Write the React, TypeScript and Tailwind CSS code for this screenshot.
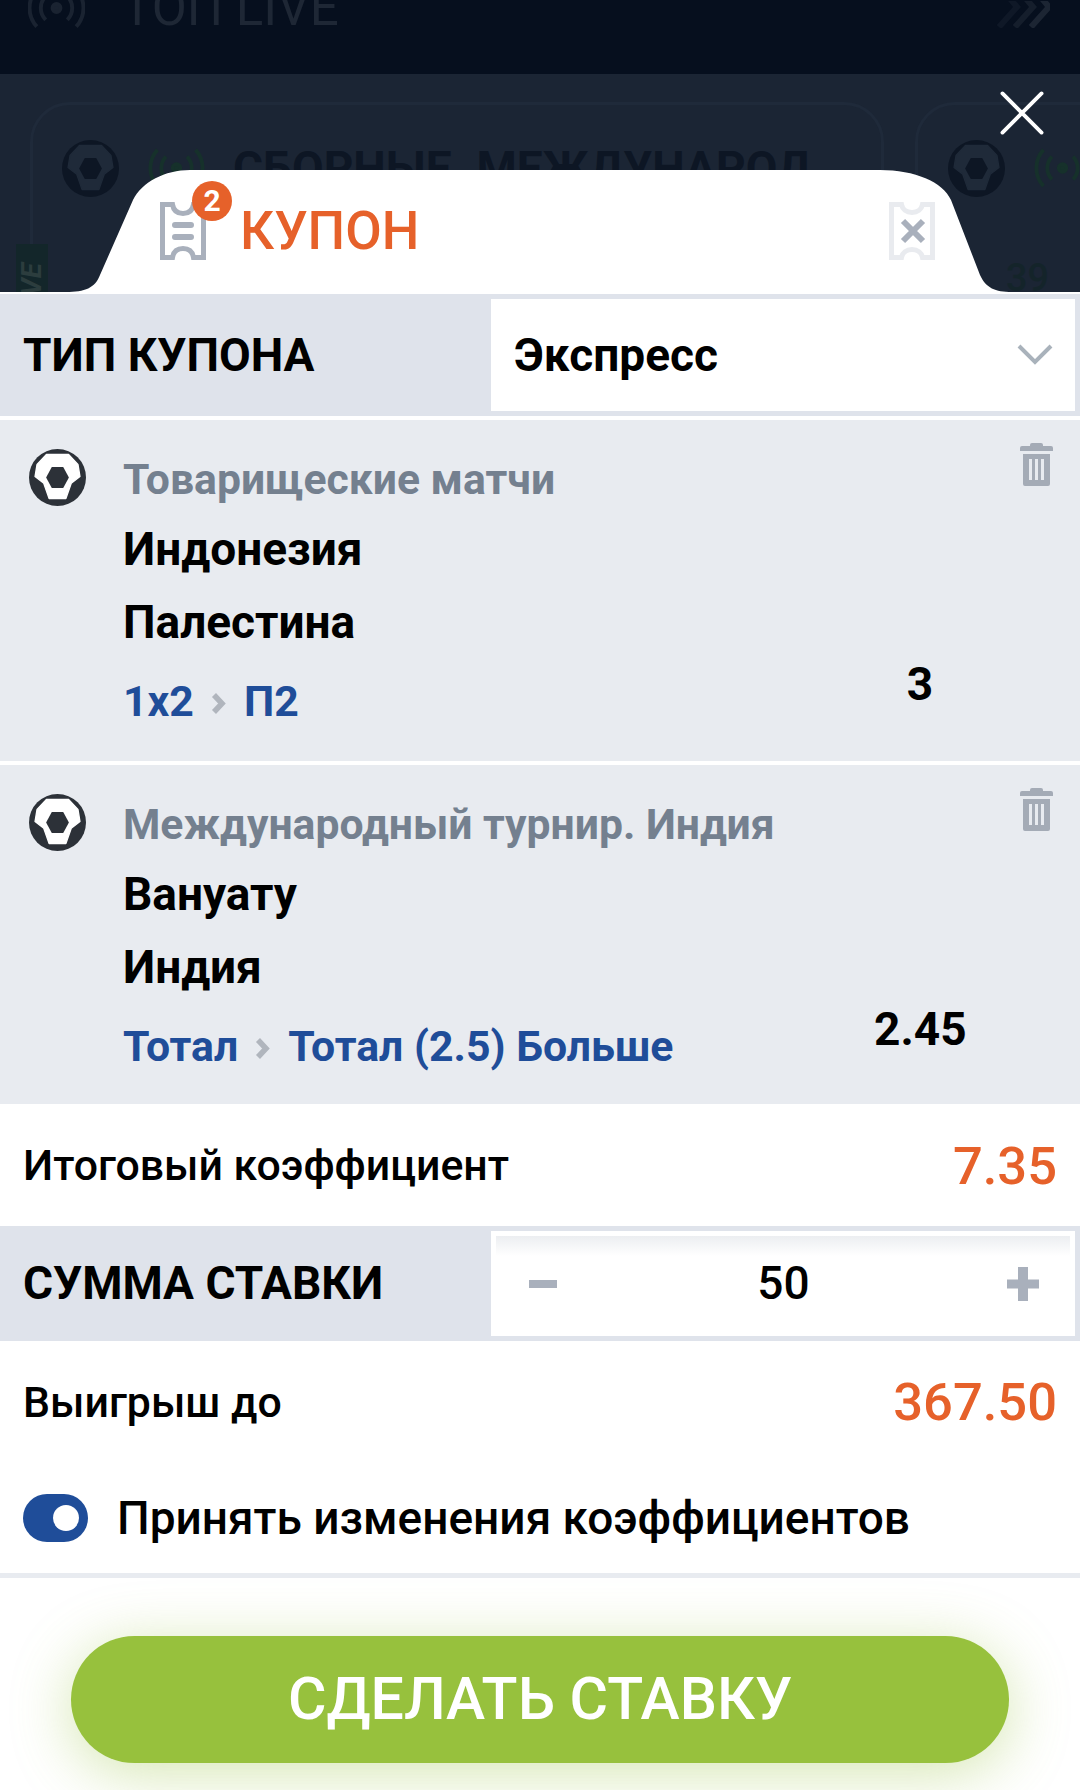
import React from "react";

const Ball = ({ className = "", dark = "#2c3138", panel = "#fff" }: { className?: string; dark?: string; panel?: string }) => (
  <svg viewBox="0 0 170 170" className={className}>
    <circle cx="85" cy="85" r="85" fill={dark} />
    <path
      d="M52 16L118 16L146 46L152 82L126 102L110 148H60L44 102L18 82L24 46Z"
      fill={panel}
      stroke={panel}
      strokeWidth="4"
      strokeLinejoin="round"
    />
    <path d="M51 85L68 54H102L119 85L102 116H68Z" fill={dark} />
  </svg>
);

const Wave = ({ color, className = "" }: { color: string; className?: string }) => (
  <svg viewBox="0 0 58 42" className={className} fill="none" stroke={color} strokeWidth="4">
    <circle cx="29" cy="21" r="4" fill={color} />
    <path d="M18 9a17 17 0 0 0 0 24M40 9a17 17 0 0 1 0 24" />
    <path d="M9 2a28 28 0 0 0 0 38M49 2a28 28 0 0 1 0 38" />
  </svg>
);

const Trash = () => (
  <svg viewBox="0 0 33 43" className="w-[33px] h-[43px]" fill="#a4abb6">
    <path d="M12 0h9a2 2 0 0 1 2 2v1h8a2 2 0 0 1 2 2v3H0V5a2 2 0 0 1 2-2h8V2a2 2 0 0 1 2-2z" />
    <path fillRule="evenodd" d="M3 11h27v30a2 2 0 0 1-2 2H5a2 2 0 0 1-2-2zM9 16v21h3V16zM15 16v21h3V16zM21 16v21h3V16z" />
  </svg>
);

const Bet = ({ league, a, b, market, pick, odd, heightClass }: { league: string; a: string; b: string; market: string; pick: string; odd: string; heightClass: string }) => (
  <div className={`relative ${heightClass} bg-[#e8ebf0] pt-[29px] pl-[29px] flex gap-[37px] shrink-0`}>
    <Ball className="w-[57px] h-[57px] shrink-0" dark="#2c3138" />
    <div className="flex flex-col">
      <div className="text-[42.700px] leading-[60px] font-bold text-[#74808f]">{league}</div>
      <div className="text-[46px] leading-[73px] font-bold text-black mt-[4px]">{a}</div>
      <div className="text-[46px] leading-[73px] font-bold text-black">{b}</div>
      <div className="flex items-center gap-[17px] text-[42.800px] leading-[70px] font-bold text-[#1f4d99] mt-[7px]">
        <span>{market}</span>
        <svg viewBox="0 0 16 23" className="w-[16px] h-[23px] mt-[4px]" fill="none" stroke="#b0b5bd" strokeWidth="5.500"><path d="M3 3l8 8.500-8 8.500" /></svg>
        <span>{pick}</span>
      </div>
    </div>
    <div className="absolute right-[27px] top-[23px]"><Trash /></div>
    <div className="absolute right-[114px] top-[234px] w-[92px] text-center text-[46px] leading-[60px] font-bold text-black">{odd}</div>
  </div>
);

export default function App() {
  return (
    <div className="relative w-[1080px] h-[1790px] overflow-hidden bg-[#1b2534]" style={{ fontFamily: "Roboto, sans-serif" }}>
      <div className="h-[74px] bg-[#060f1e] flex items-end justify-between pl-[28px] pr-[30px] pb-[43px]">
        <div className="flex items-center gap-[37px]">
          <Wave color="#1a2331" className="w-[57px] h-[42px]" />
          <span className="text-[51px] leading-[46px] text-[#1e2735]">ТОП LIVE</span>
        </div>
        <svg viewBox="0 0 55 27" className="w-[55px] h-[27px] mb-[3px]" fill="none" strokeWidth="6">
          <path d="M12 -6L22 6L4 26" stroke="#0f1827" />
          <path d="M28 -6L38 6L20 26" stroke="#151e2c" />
          <path d="M44 -6L54 6L36 26" stroke="#1c2533" />
        </svg>
      </div>
      <div className="flex gap-[31px] pl-[30px] pt-[28px]">
        <div className="w-[854px] h-[400px] shrink-0 rounded-[40px] border-[3px] border-[#1f2a3a] pl-[29px] pt-[35px] flex items-start gap-[29px]">
          <Ball className="w-[57px] h-[57px]" dark="#0d1624" panel="#1f2a39" />
          <Wave color="#16312b" className="w-[57px] h-[40px] mt-[8px]" />
          <span className="text-[46px] leading-[56px] font-bold text-[#0d1624] whitespace-nowrap -ml-[1px]">СБОРНЫЕ. МЕЖДУНАРОД</span>
        </div>
        <div className="w-[300px] h-[400px] shrink-0 rounded-[40px] border-[3px] border-[#1f2a3a] pl-[30px] pt-[35px] flex items-start gap-[29px]">
          <Ball className="w-[57px] h-[57px]" dark="#0d1624" panel="#1f2a39" />
          <Wave color="#16312b" className="w-[57px] h-[40px] mt-[8px]" />
        </div>
      </div>
      <div className="absolute left-[16px] top-[244px] w-[32px] h-[50px] bg-[#13262a] overflow-hidden">
        <div className="absolute left-[1px] top-[19px] [writing-mode:vertical-rl] rotate-180 text-[28px] leading-[30px] font-bold italic text-[#2c3d3e]">LIVE</div>
      </div>
      <div className="absolute left-[1006px] top-[253px] text-[38px] leading-[50px] font-medium text-[#14242a]">39</div>

      <svg viewBox="0 0 24 24" className="absolute left-[999px] top-[90px] w-[46px] h-[46px]" fill="none" stroke="#fff" strokeWidth="2" strokeLinecap="round"><path d="M1.800 1.800l20.400 20.400M22.200 1.800l-20.400 20.400" /></svg>

      <div className="absolute inset-x-0 top-[170px] bottom-0 flex flex-col">
        <div className="relative h-[124px] shrink-0">
          <svg viewBox="0 0 1080 124" className="absolute inset-0 w-full h-full" fill="#fff">
            <path d="M0 122H66C85 122 95 118 100 105L133 30C142 12 165 0 190 0L880 0C915 0 943 12 951 30L980 105C986 118 995 122 1012 122H1080V124H0Z" />
          </svg>
          <div className="relative flex items-center justify-between pl-[160px] pr-[145px] pt-[31px]">
            <div className="relative flex items-center gap-[34px]">
              <svg viewBox="0 0 46 58" className="w-[46px] h-[58px]" fill="none" stroke="#a9b0bc" strokeWidth="5">
                <path d="M2.500 2.500h10c1 6 5 9 10.500 9s9.500-3 10.500-9h10v53H33.500c-1-6-5-9-10.500-9s-9.500 3-10.500 9h-10z" />
                <path d="M15 23h16M15 35h16" strokeWidth="6" strokeLinecap="round" />
              </svg>
              <div className="absolute left-[32px] top-[-20px] w-[40px] h-[40px] rounded-full bg-[#e6612a] text-white text-[30px] leading-[40px] font-bold text-center">2</div>
              <span className="text-[53px] leading-[60px] font-medium text-[#e6612a]">КУПОН</span>
            </div>
            <svg viewBox="0 0 46 58" className="w-[46px] h-[58px]" fill="none" stroke="#e9ebef" strokeWidth="5">
              <path d="M2.500 2.500h10c1 5 5 8 10.500 8s9.500-3 10.500-8h10v53H33.500c-1-5-5-8-10.500-8s-9.500 3-10.500 8h-10z" />
              <path d="M14 19l20 20M34 19L14 39" stroke="#a9b0bc" strokeWidth="6" />
            </svg>
          </div>
        </div>

        <div className="h-[122px] shrink-0 bg-[#dfe3eb] flex items-stretch py-[5px] pr-[5px]">
          <div className="w-[491px] pl-[23px] flex items-center text-[46px] font-bold text-black">ТИП КУПОНА</div>
          <div className="flex-1 bg-white flex items-center justify-between pl-[23px] pr-[22px]">
            <span className="text-[46px] font-bold text-black">Экспресс</span>
            <svg viewBox="0 0 36 22" className="w-[36px] h-[22px]" fill="none" stroke="#a9b2bb" strokeWidth="4"><path d="M2 2l16 16L34 2" /></svg>
          </div>
        </div>

        <div className="h-[4px] shrink-0 bg-white" />
        <Bet league="Товарищеские матчи" a="Индонезия" b="Палестина" market="1x2" pick="П2" odd="3" heightClass="h-[341px]" />
        <div className="h-[4px] shrink-0 bg-white" />
        <Bet league="Международный турнир. Индия" a="Вануату" b="Индия" market="Тотал" pick="Тотал (2.5) Больше" odd="2.45" heightClass="h-[339px]" />

        <div className="flex-1 bg-white flex flex-col">
          <div className="h-[122px] shrink-0 flex items-center justify-between px-[23px]">
            <span className="text-[42.800px] font-medium text-black">Итоговый коэффициент</span>
            <span className="text-[52.500px] font-medium text-[#e6612a] mt-[2px]">7.35</span>
          </div>
          <div className="h-[115px] shrink-0 bg-[#dfe3eb] flex items-stretch py-[5px] pr-[5px]">
            <div className="w-[491px] pl-[23px] flex items-center text-[46px] font-bold text-black">СУММА СТАВКИ</div>
            <div className="relative flex-1 bg-white flex items-center justify-between pl-[38px] pr-[36px]">
              <div className="absolute left-[5px] right-[5px] top-[5px] h-[20px] bg-gradient-to-b from-[#eceef1] to-white" />
              <div className="w-[28px] h-[8px] bg-[#a9b0bc]" />
              <span className="text-[46px] font-medium text-black ml-[3px]">50</span>
              <svg viewBox="0 0 32 34" className="w-[32px] h-[34px]" fill="#a9b0bc"><path d="M11 0h10v12.500h11v9H21V34H11V21.500H0v-9h11z" /></svg>
            </div>
          </div>
          <div className="h-[122px] shrink-0 flex items-center justify-between px-[23px]">
            <span className="text-[42.800px] font-medium text-black">Выигрыш до</span>
            <span className="text-[52.500px] font-medium text-[#e6612a] mt-[1px]">367.50</span>
          </div>
          <div className="flex items-center gap-[29px] pl-[23px] h-[110px] shrink-0">
            <div className="relative w-[65px] h-[48px] rounded-full bg-[#1f4d99]">
              <div className="absolute right-[9px] top-[11px] w-[26px] h-[26px] rounded-full bg-white" />
            </div>
            <span className="text-[46px] font-medium text-black">Принять изменения коэффициентов</span>
          </div>
          <div className="h-[5px] shrink-0 bg-[#e8ebf0]" />
          <div className="flex-1 flex justify-center pt-[58px]">
            <div className="w-[938px] h-[127px] rounded-full bg-[#97c13d] shadow-[0_10px_60px_rgba(151,193,61,0.4)] flex items-center justify-center text-[59px] font-medium text-white">СДЕЛАТЬ СТАВКУ</div>
          </div>
        </div>
      </div>
    </div>
  );
}
